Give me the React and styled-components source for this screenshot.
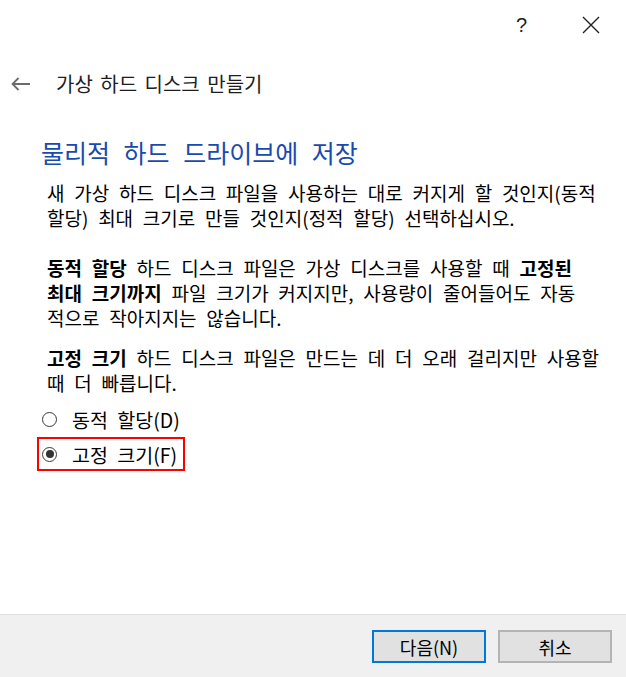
import { styled, createGlobalStyle } from 'styled-components'

const GlobalStyle = createGlobalStyle`
  html, body {
    margin: 0;
    padding: 0;
    background: #fff;
  }
  body {
    font-family: "Noto Sans CJK KR", "Noto Sans", sans-serif;
    color: #000;
  }
`

const options = [
  { label: '동적 할당(D)', checked: false, highlighted: false },
  { label: '고정 크기(F)', checked: true, highlighted: true },
]

function App() {
  return (
    <Window>
      <GlobalStyle />
      <TopBar>
        <Help>?</Help>
        <CloseButton aria-label="닫기">
          <svg width="18" height="18" viewBox="0 0 18 18">
            <path d="M1 1 L17 17 M17 1 L1 17" stroke="#222" strokeWidth="1.4" fill="none" />
          </svg>
        </CloseButton>
      </TopBar>

      <Header>
        <BackArrow>
          <svg width="20" height="14" viewBox="0 0 20 14">
            <path d="M19 7 H1.5 M7.5 1 L1.5 7 L7.5 13" stroke="#6b6b6b" strokeWidth="1.8" fill="none" />
          </svg>
        </BackArrow>
        <Title>가상 하드 디스크 만들기</Title>
      </Header>

      <Content>
        <Heading>물리적 하드 드라이브에 저장</Heading>

        <Paragraph gap={25}>
          <Line>새 가상 하드 디스크 파일을 사용하는 대로 커지게 할 것인지(동적</Line>
          <Line>할당) 최대 크기로 만들 것인지(정적 할당) 선택하십시오.</Line>
        </Paragraph>

        <Paragraph gap={15}>
          <Line><b>동적 할당</b> 하드 디스크 파일은 가상 디스크를 사용할 때 <b>고정된</b></Line>
          <Line><b>최대 크기까지</b> 파일 크기가 커지지만, 사용량이 줄어들어도 자동</Line>
          <Line>적으로 작아지지는 않습니다.</Line>
        </Paragraph>

        <Paragraph gap={20}>
          <Line><b>고정 크기</b> 하드 디스크 파일은 만드는 데 더 오래 걸리지만 사용할</Line>
          <Line>때 더 빠릅니다.</Line>
        </Paragraph>

        <RadioGroup>
          {options.map((opt) => (
            <RadioRow key={opt.label} highlighted={opt.highlighted}>
              <RadioCircle checked={opt.checked} />
              <span>{opt.label}</span>
            </RadioRow>
          ))}
        </RadioGroup>
      </Content>

      <Footer>
        <Button primary>다음(N)</Button>
        <Button>취소</Button>
      </Footer>
    </Window>
  )
}

export default App

const Window = styled.div`
  width: 626px;
  height: 677px;
  display: flex;
  flex-direction: column;
  background: #fff;
  overflow: hidden;
`
const TopBar = styled.div`
  height: 50px;
  display: flex;
  align-items: center;
  justify-content: flex-end;
  padding-right: 26px;
  gap: 55px;
`
const Help = styled.span`
  font-family: "Liberation Sans", Arial, sans-serif;
  font-size: 20px;
  color: #222;
  line-height: 1;
`
const CloseButton = styled.span`
  display: flex;
  width: 18px;
  height: 18px;
`
const Header = styled.div`
  height: 68px;
  display: flex;
  align-items: center;
  padding-left: 11px;
`
const BackArrow = styled.span`
  display: flex;
  width: 20px;
  margin-right: 25px;
`
const Title = styled.div`
  font-size: 20px;
  word-spacing: 3px;
  color: #1e1e1e;
  line-height: 24px;
  white-space: nowrap;
`
const Content = styled.div`
  display: flex;
  flex-direction: column;
  padding-top: 17px;
`
const Heading = styled.h1`
  margin: 0 0 11px 41px;
  font-size: 25px;
  font-weight: 400;
  line-height: 34px;
  word-spacing: 8px;
  color: #1b4aae;
  white-space: nowrap;
`
const Paragraph = styled.p`
  margin: 0 0 ${(p) => p.gap}px 47px;
  font-size: 19px;
  line-height: 25px;
  word-spacing: 5.5px;

  b {
    font-weight: 700;
  }
`
const Line = styled.span`
  display: block;
  white-space: nowrap;
`
const RadioGroup = styled.div`
  display: flex;
  flex-direction: column;
  gap: 1px;
  margin: -13px 0 0 37px;
  align-items: flex-start;
`
const RadioRow = styled.label`
  box-sizing: border-box;
  height: 34px;
  display: flex;
  align-items: center;
  gap: 15px;
  padding: 0 6px 0 3px;
  font-size: 19.5px;
  word-spacing: 5px;
  border: 2px solid ${(p) => (p.highlighted ? '#f00' : 'transparent')};
`
const RadioCircle = styled.span`
  box-sizing: border-box;
  width: 15px;
  height: 15px;
  border-radius: 50%;
  border: 1.6px solid #3a3a3a;
  display: flex;
  align-items: center;
  justify-content: center;

  &::after {
    content: '';
    width: 8px;
    height: 8px;
    border-radius: 50%;
    background: #333;
    display: ${(p) => (p.checked ? 'block' : 'none')};
  }
`
const Footer = styled.div`
  margin-top: auto;
  box-sizing: border-box;
  height: 63px;
  border-top: 1px solid #dfdfdf;
  background: #f0f0f0;
  display: flex;
  justify-content: flex-end;
  align-items: flex-start;
  gap: 12px;
  padding: 15px 14px 0 0;
`
const Button = styled.button`
  box-sizing: border-box;
  width: 114px;
  height: 33px;
  background: #e1e1e1;
  border: 2px solid ${(p) => (p.primary ? '#0078d7' : '#b4b4b4')};
  font-family: "Noto Sans CJK KR", "Noto Sans", sans-serif;
  font-size: 18px;
  color: #000;
  padding: 0;
  line-height: 1;
`
